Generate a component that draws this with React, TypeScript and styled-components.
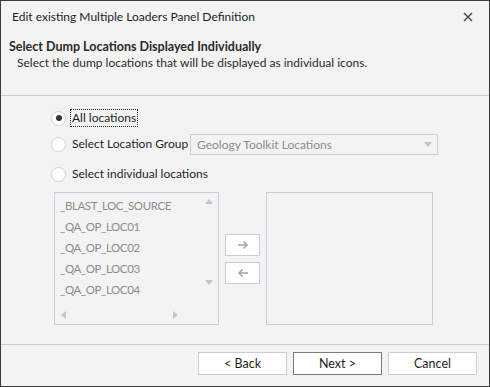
import styled, { createGlobalStyle } from "styled-components";

const GlobalStyle = createGlobalStyle`
  html, body {
    margin: 0;
    padding: 0;
    background: #f3f3f3;
  }
  * {
    box-sizing: border-box;
  }
`;

const Colors = {
  bg: "#f3f3f3",
  text: "#1e1e1e",
  muted: "#8c8c8c",
  line: "#cbcadf",
  frame: "#3c3c3c",
  arrow: "#c4c4c4",
};

const Window = styled.div`
  width: 490px;
  height: 387px;
  border: 1px solid ${Colors.frame};
  background: ${Colors.bg};
  display: flex;
  flex-direction: column;
  font-family: Lato, "Noto Sans", sans-serif;
  font-size: 12px;
  color: ${Colors.text};
`;

const TitleBar = styled.div`
  height: 31px;
  display: flex;
  align-items: center;
  justify-content: space-between;
  padding: 0 16px 0 11px;
`;

const Title = styled.span`
  font-size: 12px;
`;

const CloseButton = styled.span`
  display: flex;
  align-items: center;
  justify-content: center;
  width: 10px;
  height: 10px;
  color: #444;
`;

const Header = styled.div`
  height: 64px;
  padding: 7px 0 0 8px;
  border-bottom: 1px solid ${Colors.line};
`;

const Heading = styled.div`
  font-weight: 700;
  font-size: 12.5px;
  line-height: 16px;
  color: #2a2a2a;
`;

const SubHeading = styled.div`
  line-height: 16px;
  padding-left: 8px;
  color: #2a2a2a;
`;

const Body = styled.div`
  flex: 1;
  padding: 12px 0 0 50px;
  display: flex;
  flex-direction: column;
`;

const RadioRow = styled.div<{ mt?: number; h?: number }>`
  display: flex;
  align-items: center;
  height: ${(p) => p.h ?? 20}px;
  margin-top: ${(p) => p.mt ?? 0}px;
`;

const RadioCircle = styled.span<{ checked?: boolean }>`
  width: 15px;
  height: 15px;
  border-radius: 50%;
  border: 1px solid #cfcfd8;
  background: #fff;
  display: flex;
  align-items: center;
  justify-content: center;
  flex-shrink: 0;
  margin-right: 4px;

  &::after {
    content: "";
    width: 6px;
    height: 6px;
    border-radius: 50%;
    background: ${(p) => (p.checked ? "#333" : "transparent")};
  }
`;

const RadioLabel = styled.span<{ focused?: boolean; w?: number }>`
  line-height: 16px;
  padding: 0 1px;
  border: 1px dotted ${(p) => (p.focused ? "#222" : "transparent")};
  width: ${(p) => (p.w ? `${p.w}px` : "auto")};
  white-space: nowrap;
`;

const Combo = styled.div`
  width: 248px;
  height: 21px;
  border: 1px solid ${Colors.line};
  display: flex;
  align-items: center;
  justify-content: space-between;
  padding: 0 5px 0 6px;
  color: ${Colors.muted};
`;

const Lists = styled.div`
  display: flex;
  align-items: center;
  gap: 6px;
  margin: 8px 0 0 3px;
`;

const ListBox = styled.div<{ w: number }>`
  width: ${(p) => p.w}px;
  height: 133px;
  border: 1px solid ${Colors.line};
  display: grid;
  grid-template-columns: 1fr 18px;
  grid-template-rows: 1fr 19px;
`;

const ListItems = styled.div`
  overflow: hidden;
  padding: 2px 0 0 5px;
`;

const ListItem = styled.div`
  height: 21px;
  line-height: 21px;
  font-size: 11.5px;
  letter-spacing: -0.4px;
  color: ${Colors.muted};
  white-space: nowrap;
`;

const VScroll = styled.div`
  display: flex;
  flex-direction: column;
  justify-content: space-between;
  align-items: center;
  padding: 6px 0 20px;
`;

const HScroll = styled.div`
  display: flex;
  justify-content: space-between;
  align-items: center;
  padding: 0 22px 0 6px;
`;

const Tri = styled.span<{ dir: "up" | "down" | "left" | "right" }>`
  width: 0;
  height: 0;
  border: 4px solid transparent;
  ${(p) =>
    p.dir === "up"
      ? `border-bottom: 5px solid ${Colors.arrow}; border-top-width: 0;`
      : p.dir === "down"
      ? `border-top: 5px solid ${Colors.arrow}; border-bottom-width: 0;`
      : p.dir === "left"
      ? `border-right: 5px solid ${Colors.arrow}; border-left-width: 0;`
      : `border-left: 5px solid ${Colors.arrow}; border-right-width: 0;`}
`;

const MoveButtons = styled.div`
  display: flex;
  flex-direction: column;
  gap: 6px;
`;

const MoveButton = styled.div`
  width: 35px;
  height: 22px;
  border: 1px solid ${Colors.line};
  background: #fff;
  display: flex;
  align-items: center;
  justify-content: center;
`;

const Footer = styled.div`
  height: 42px;
  border-top: 1px solid ${Colors.line};
  display: flex;
  justify-content: flex-end;
  gap: 6px;
  padding: 7px 12px 0 0;
`;

const Button = styled.div<{ primary?: boolean }>`
  width: 89px;
  height: 23px;
  background: #fff;
  font-size: 12.5px;
  border: 1px solid ${(p) => (p.primary ? "#7a7a7a" : Colors.line)};
  display: flex;
  align-items: center;
  justify-content: center;
`;

const Arrow = ({ left }: { left?: boolean }) => (
  <svg width="12" height="10" viewBox="0 0 12 10">
    <g
      transform={left ? "scale(-1 1) translate(-12 0)" : undefined}
      fill="none"
      stroke="#a8a8a8"
      strokeWidth="1.6"
    >
      <path d="M1 5 H10" />
      <path d="M6.5 1.5 L10 5 L6.5 8.5" />
    </g>
  </svg>
);

const locations = [
  "_BLAST_LOC_SOURCE",
  "_QA_OP_LOC01",
  "_QA_OP_LOC02",
  "_QA_OP_LOC03",
  "_QA_OP_LOC04",
  "_QA_OP_LOC05",
];

const App = () => {
  return (
    <>
      <GlobalStyle />
      <Window>
        <TitleBar>
          <Title>Edit existing Multiple Loaders Panel Definition</Title>
          <CloseButton>
            <svg width="10" height="10" viewBox="0 0 10 10">
              <path d="M1 1 L9 9 M9 1 L1 9" stroke="#444" strokeWidth="1.4" />
            </svg>
          </CloseButton>
        </TitleBar>
        <Header>
          <Heading>Select Dump Locations Displayed Individually</Heading>
          <SubHeading>
            Select the dump locations that will be displayed as individual icons.
          </SubHeading>
        </Header>
        <Body>
          <RadioRow>
            <RadioCircle checked />
            <RadioLabel focused>All locations</RadioLabel>
          </RadioRow>
          <RadioRow mt={5} h={22}>
            <RadioCircle />
            <RadioLabel w={120}>Select Location Group</RadioLabel>
            <Combo>
              <span>Geology Toolkit Locations</span>
              <Tri dir="down" />
            </Combo>
          </RadioRow>
          <RadioRow mt={9}>
            <RadioCircle />
            <RadioLabel>Select individual locations</RadioLabel>
          </RadioRow>
          <Lists>
            <ListBox w={165}>
              <ListItems>
                {locations.map((l) => (
                  <ListItem key={l}>{l}</ListItem>
                ))}
              </ListItems>
              <VScroll>
                <Tri dir="up" />
                <Tri dir="down" />
              </VScroll>
              <HScroll>
                <Tri dir="left" />
                <Tri dir="right" />
              </HScroll>
            </ListBox>
            <MoveButtons>
              <MoveButton>
                <Arrow />
              </MoveButton>
              <MoveButton>
                <Arrow left />
              </MoveButton>
            </MoveButtons>
            <ListBox w={167} />
          </Lists>
        </Body>
        <Footer>
          <Button>&lt; Back</Button>
          <Button primary>Next &gt;</Button>
          <Button>Cancel</Button>
        </Footer>
      </Window>
    </>
  );
};

export default App;
